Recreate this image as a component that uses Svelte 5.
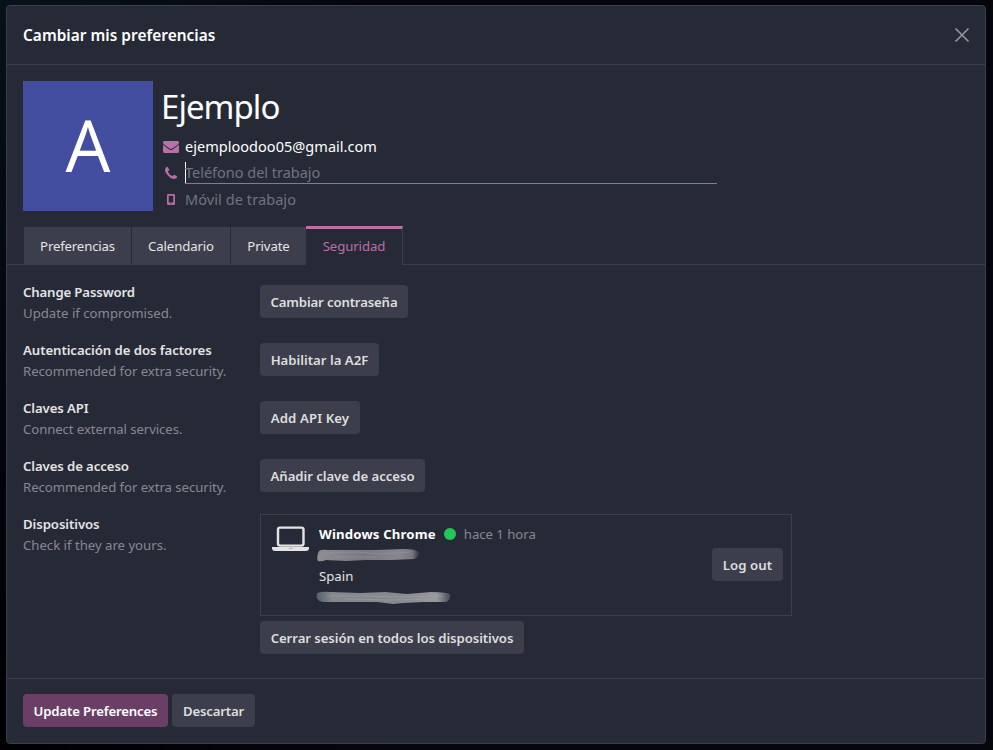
<script>
  const contacts = [
    { icon: 'mail', text: 'ejemploodoo05@gmail.com', kind: 'filled', ls: 0.03 },
    { icon: 'phone', text: 'Teléfono del trabajo', kind: 'focused', ls: -0.02 },
    { icon: 'mobile', text: 'Móvil de trabajo', kind: 'empty', ls: 0.08 }
  ];
  const tabs = [
    { label: 'Preferencias', width: 107, ls: -0.16 },
    { label: 'Calendario', width: 98, ls: -0.11 },
    { label: 'Private', width: 75, ls: -0.1 },
    { label: 'Seguridad', width: 97, ls: -0.1, active: true }
  ];
  const settings = [
    { title: 'Change Password', ls: -0.14, hint: 'Update if compromised.', hls: 0, action: 'Cambiar contraseña', als: -0.155, width: 148 },
    { title: 'Autenticación de dos factores', ls: -0.07, hint: 'Recommended for extra security.', hls: -0.06, action: 'Habilitar la A2F', als: 0, width: 119 },
    { title: 'Claves API', ls: -0.1, hint: 'Connect external services.', hls: -0.09, action: 'Add API Key', als: 0.1, width: 100 },
    { title: 'Claves de acceso', ls: -0.1, hint: 'Recommended for extra security.', hls: -0.06, action: 'Añadir clave de acceso', als: -0.06, width: 165 }
  ];
</script>

{#snippet button(label, width, ls, primary = false)}
  <button class:primary style:width="{width}px" style:letter-spacing="{ls}px">{label}</button>
{/snippet}

<div class="backdrop">
  <div class="modal" role="dialog">
    <header>
      <h4>Cambiar mis preferencias</h4>
      <svg class="close" width="16" height="16" viewBox="0 0 16 16"><path d="M1.500 1.500l13 13M14.500 1.500l-13 13" /></svg>
    </header>

    <main>
      <section class="profile">
        <div class="avatar">
          <span>A</span>
        </div>
        <div class="identity">
          <h1>Ejemplo</h1>
          {#each contacts as c}
            <div class="contact">
              <span class="icon">
                {#if c.icon === 'mail'}
                  <svg width="16" height="12" viewBox="0 0 16 12"><path d="M1.400 0H14.600Q16 0 16 1.400C16 2.400 15.200 3.400 14.300 4L9.700 7.200C9.100 7.600 8.600 8 8 8S6.900 7.600 6.300 7.200L1.700 4C.9 3.400 0 2.300 0 1.400Q0 0 1.400 0ZM0 3.400C.3 3.900.6 4.300 1 4.600L5.600 8C6.300 8.500 7.100 9 8 9S9.700 8.500 10.400 8L15 4.600C15.400 4.300 15.700 3.900 16 3.400V10.600Q16 12 14.600 12H1.400Q0 12 0 10.600Z" /></svg>
                {:else if c.icon === 'phone'}
                  <svg width="12" height="12" viewBox="0 0 1408 1408"><path d="M1408 1112q0 27-10 70.500t-21 68.500q-21 50-122 106-94 51-186 51-27 0-52.500-3.500t-57.500-12.500-47.500-14.500-55.500-20.500-49-18q-98-35-175-83-128-79-264.500-215.500t-215.500-264.500q-48-77-83-175-3-9-18-49t-20.500-55.500-14.500-47.500-12.500-57.500-3.500-52.500q0-92 51-186 56-101 106-122 25-11 68.500-21t70.500-10q14 0 21 3 18 6 53 76 11 19 30 54t35 63.500 31 53.500q3 4 17.500 25t21.500 35.500 7 28.500q0 20-28.500 50t-62 55-62 53-28.500 46q0 9 5 22.500t8.500 20.500 14 24 11.500 19q76 137 174 235t235 174q2 1 19 11.500t24 14 20.500 8.500 22.500 5q18 0 46-28.500t53-62 55-62 50-28.500q14 0 28.500 7t35.500 21.500 25 17.500q25 15 53.500 31t63.500 35 54 30q70 35 76 53 3 7 3 21z" /></svg>
                {:else}
                  <svg width="8" height="11" viewBox="0 0 8 11"><path fill-rule="evenodd" d="M1.300 0H6.700Q8 0 8 1.300V9.700Q8 11 6.700 11H1.300Q0 11 0 9.700V1.300Q0 0 1.300 0ZM1.700 1.800V8.600H6.300V1.800ZM4 9.200A.6.6 0 1 0 4 10.400A.6.6 0 1 0 4 9.200Z" /></svg>
                {/if}
              </span>
              <span class="field {c.kind}" style:letter-spacing="{c.ls}px">{c.text}</span>
            </div>
          {/each}
        </div>
      </section>

      <nav>
        {#each tabs as t}
          <div class="tab" class:active={t.active} style:width="{t.width}px" style:letter-spacing="{t.ls}px">{t.label}</div>
        {/each}
      </nav>

      <section class="settings">
        {#each settings as s}
          <div class="row">
            <div class="label">
              <b style:letter-spacing="{s.ls}px">{s.title}</b>
              <p style:letter-spacing="{s.hls}px">{s.hint}</p>
            </div>
            {@render button(s.action, s.width, s.als)}
          </div>
        {/each}
        <div class="row devices">
          <div class="label">
            <b>Dispositivos</b>
            <p>Check if they are yours.</p>
          </div>
          <div>
            <div class="device">
              <svg class="laptop" width="37" height="25" viewBox="0 0 37 25">
                <rect x="6" y="1.600" width="25.500" height="18" rx="2" fill="none" stroke="#e4e4e4" stroke-width="2.400" />
                <path d="M0 21H37V22.800Q36.500 25 34 25H3Q.5 25 0 22.800Z" fill="#e4e4e4" />
                <path d="M17 22.400H20.500" stroke="#a5a6ac" stroke-width=".9" />
              </svg>
              <div class="info">
                <div class="name"><b>Windows Chrome</b><i></i><span>hace 1 hora</span></div>
                <div class="line">
                  <svg width="106" height="18" viewBox="0 0 106 18">
                    <defs>
                      <linearGradient id="smear-a"><stop offset="0" stop-color="#8d8f95" /><stop offset=".45" stop-color="#77797f" /><stop offset=".8" stop-color="#85878d" /><stop offset=".93" stop-color="#777980" /><stop offset="1" stop-color="#30343f" /></linearGradient>
                      <filter id="soft"><feGaussianBlur stdDeviation=".7" /></filter>
                    </defs>
                    <g filter="url(#soft)">
                      <path d="M3 5Q6 3 12 4L38 4L60 4L88 3Q99 3 103 6Q104 11 98 13L76 14L50 14L30 15L10 14Q6 16 2 15Q0 12 3 5Z" fill="url(#smear-a)" />
                      <path d="M8 7L40 6L66 8L94 6M18 11L60 11" fill="none" stroke="#9b9ca1" stroke-width="1" opacity=".5" />
                    </g>
                  </svg>
                </div>
                <div class="place">Spain</div>
                <div class="line second">
                  <svg width="140" height="18" viewBox="0 0 140 18">
                    <defs><linearGradient id="smear-b"><stop offset="0" stop-color="#56616b" /><stop offset=".12" stop-color="#85888d" /><stop offset=".6" stop-color="#85888d" /><stop offset=".9" stop-color="#98999c" /><stop offset="1" stop-color="#4a4d57" /></linearGradient></defs>
                    <g filter="url(#soft)">
                      <path d="M2 4Q8 2 16 3L45 4L70 3L92 5L116 3Q130 3 135 5Q136 11 131 13L108 13L88 14L78 15L62 13L30 13L8 13Q0 12 2 4Z" fill="url(#smear-b)" />
                      <path d="M12 7L52 7L84 8L128 7M30 10L72 11L120 10" fill="none" stroke="#a2a3a7" stroke-width="1" opacity=".5" />
                    </g>
                  </svg>
                </div>
              </div>
              {@render button('Log out', 71, 0.08)}
            </div>
            {@render button('Cerrar sesión en todos los dispositivos', 264, -0.08)}
          </div>
        </div>
      </section>
    </main>

    <footer>
      {@render button('Update Preferences', 145, -0.17, true)}
      {@render button('Descartar', 83, -0.2)}
    </footer>
  </div>
</div>

<style>
  :global(body) { background: #03050b; }
  * { box-sizing: border-box; }
  .backdrop {
    width: 993px; height: 750px; padding: 5px 7px 5px 6px; overflow: hidden;
    background: linear-gradient(90deg, transparent 2%, #05050c 40%), linear-gradient(180deg, #061217 0, #030811 35%, #020207 75%, #010103 100%);
    font-family: "Noto Sans", "Open Sans", sans-serif; font-size: 13.2px; line-height: 21px; color: #e4e4e4;
  }
  .modal {
    width: 980px; height: 739px; display: flex; flex-direction: column;
    background: #262a36; border: 1px solid #3c3e4b; border-radius: 4px;
  }
  header {
    height: 59px; flex: none; display: flex; align-items: center; justify-content: space-between;
    padding: 0 15px 0 16px; border-bottom: 1px solid #3c3e4b;
  }
  h4 { margin: 0; padding-top: 2px; font-size: 15.4px; font-weight: 600; letter-spacing: .03px; color: #fff; line-height: 24px; }
  .close { fill: none; stroke: #9496a0; stroke-width: 1.6; }
  main { flex: 1; display: flex; flex-direction: column; }
  .profile { display: flex; gap: 9px; padding: 16px 16px 0; height: 161px; }
  .avatar {
    width: 130px; height: 130px; display: flex; justify-content: center;
    background: #444ea1; color: #fff; font-family: "Open Sans", "Noto Sans", sans-serif; font-size: 71px; line-height: 127px;
  }
  .identity { flex: 1; }
  h1 { margin: 0 0 0 -1px; padding-top: 1px; height: 52px; font-size: 33px; line-height: 50px; font-weight: 400; letter-spacing: -.95px; color: #fff; }
  .contact { display: flex; align-items: center; height: 26.700px; }
  .icon { width: 17px; margin-right: 6px; display: flex; justify-content: center; }
  .icon svg { fill: #b96fa7; display: block; }
  .contact:first-of-type .icon { padding-top: 2px; }
  .field { font-size: 14.5px; line-height: 20px; height: 22px; width: 532px; border-bottom: 1px solid transparent; }
  .filled { color: #fff; line-height: 23px; }
  .focused, .empty { color: #6f7381; }
  .focused { border-bottom-color: #02b8a8; box-shadow: inset 1px 0 0 #fff; }
  nav { display: flex; align-items: flex-end; height: 39px; padding-left: 17px; border-bottom: 1px solid #3c3e4b; }
  .tab { height: 37px; margin-right: 1px; background: #3c3e4b; line-height: 39px; text-align: center; white-space: nowrap; }
  .tab.active {
    height: 39px; margin: 0 0 -1px -1px; background: #262a36; color: #b96fa7; line-height: 34px;
    border-top: 3px solid #b96fa7; border-right: 1px solid #3c3e4b;
  }
  .settings { padding: 17px 16px 0; }
  .row { display: flex; height: 58px; }
  .label { width: 237px; flex: none; letter-spacing: -.08px; }
  .label b, .label p { display: block; margin: 0; }
  b { font-weight: 600; }
  .label p { color: #868893; }
  .devices p { letter-spacing: -.02px; }
  button {
    height: 33px; flex: none; padding: 0; border: 0; border-radius: 4px; background: #3c3e4b; color: #dedede;
    font: 600 13.2px/34px "Noto Sans", "Open Sans", sans-serif; text-align: center; white-space: nowrap;
  }
  .row > button { margin-top: 3px; }
  button.primary { background: #6b3e66; color: #fff; }
  .device { width: 532px; height: 102px; margin: 0 0 5px; padding: 9px 8px 0 12px; border: 1px solid #3c3e4b; display: flex; }
  .laptop { margin: 2px 10px 0 -1px; flex: none; }
  .info { flex: 1; }
  .name { display: flex; align-items: center; height: 21px; }
  .name b { font-weight: 700; letter-spacing: .16px; color: #fff; }
  .name i { width: 12px; height: 12px; border-radius: 50%; background: #20c759; margin: -2px 8px 0; }
  .name span { color: #868893; letter-spacing: -.04px; }
  .line { height: 21px; padding-top: 1px; }
  .line svg { display: block; margin-left: -3px; }
  .line.second { padding-top: 2px; }
  .line.second svg { margin-left: -4px; }
  .place { height: 21px; }
  .device > button { margin-top: 24px; }
  footer { height: 65px; flex: none; display: flex; gap: 4px; padding: 15px 16px 0; border-top: 1px solid #3c3e4b; }
</style>
